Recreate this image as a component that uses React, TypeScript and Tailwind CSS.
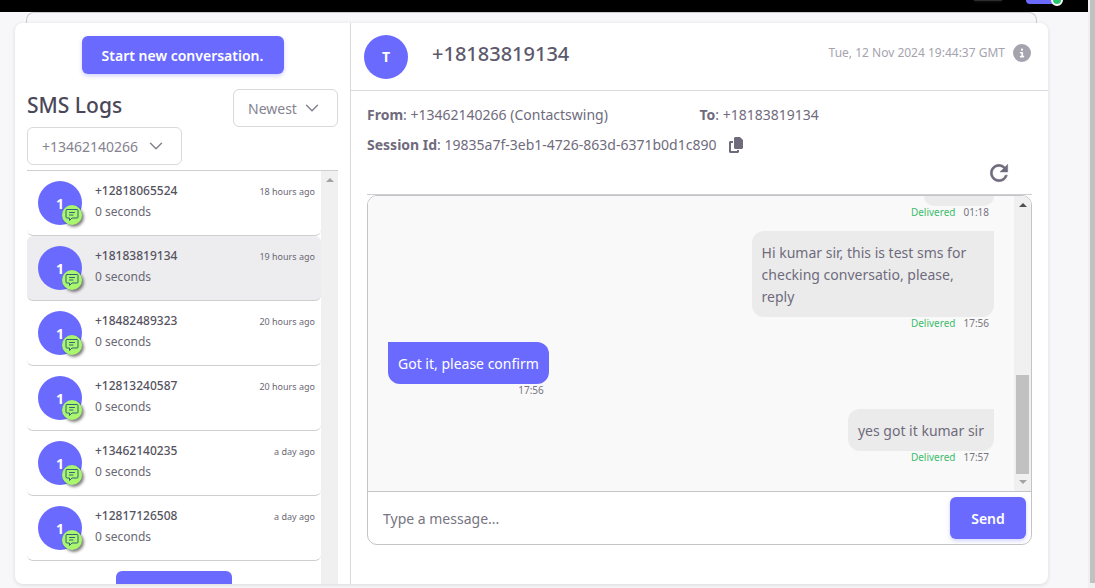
import React from "react";
import { FaCopy, FaCircleInfo } from "react-icons/fa6";
import { ChevronDown } from "lucide-react";

type Log = { phone: string; duration: string; ago: string; active?: boolean };
type Message = { text: string; time: string; sent: boolean };

const logs: Log[] = [
  { phone: "+12818065524", duration: "0 seconds", ago: "18 hours ago" },
  { phone: "+18183819134", duration: "0 seconds", ago: "19 hours ago", active: true },
  { phone: "+18482489323", duration: "0 seconds", ago: "20 hours ago" },
  { phone: "+12813240587", duration: "0 seconds", ago: "20 hours ago" },
  { phone: "+13462140235", duration: "0 seconds", ago: "a day ago" },
  { phone: "+12817126508", duration: "0 seconds", ago: "a day ago" },
];

const messages: Message[] = [
  { text: "", time: "01:18", sent: true },
  { text: "Hi kumar sir, this is test sms for checking conversatio, please, reply", time: "17:56", sent: true },
  { text: "Got it, please confirm", time: "17:56", sent: false },
  { text: "yes got it kumar sir", time: "17:57", sent: true },
];

function Dropdown({ label, value }: { label: string; value: string }) {
  return (
    <div className="relative">
      <select
        aria-label={label}
        className="h-[38px] w-full appearance-none rounded-md border border-[#d8d8dd] bg-white pl-[14px] pr-8 text-[14px] text-[#85838f]"
      >
        <option>{value}</option>
      </select>
      <ChevronDown strokeWidth={1.6} className="pointer-events-none absolute right-[15px] top-2 size-[22px] text-[#85838f]" />
    </div>
  );
}

function SmsIcon() {
  return (
    <svg viewBox="0 0 14 14" className="size-[14px]" fill="none" stroke="currentColor" strokeLinejoin="round" strokeLinecap="round">
      <path d="M2 1.500h10a1 1 0 0 1 1 1v6.500a1 1 0 0 1-1 1H7l-2.500 2.500V10H2a1 1 0 0 1-1-1V2.500a1 1 0 0 1 1-1Z" />
      <path d="M4.500 4.500h5M4.500 7h3.500" />
    </svg>
  );
}

function RefreshIcon() {
  return (
    <svg viewBox="0 0 24 24" className="size-[26px]" fill="currentColor" stroke="currentColor" strokeWidth="0.5">
      <path d="M17.650 6.350A7.958 7.958 0 0 0 12 4c-4.420 0-7.990 3.580-7.990 8s3.570 8 7.990 8c3.730 0 6.840-2.550 7.730-6h-2.080A5.990 5.990 0 0 1 12 18c-3.310 0-6-2.690-6-6s2.690-6 6-6c1.660 0 3.140.690 4.220 1.780L13 11h7V4l-2.350 2.350z" />
    </svg>
  );
}

function LogRow({ log }: { log: Log }) {
  return (
    <li
      className={
        log.active
          ? "flex h-[65px] shrink-0 rounded-md border-b border-[#cfcfd2] bg-[#ededf0] pl-[11px] pr-[6px]"
          : "flex h-[65px] shrink-0 rounded-md border-b border-[#cfcfd2] bg-white pl-[11px] pr-[6px]"
      }
    >
      <div className="relative mt-[10px] flex size-11 items-center justify-center rounded-full bg-[#6a6aff] text-[14px] font-bold text-white">
        1
        <span className="absolute bottom-0 right-0 flex size-5 items-center justify-center rounded-full bg-[#a8f76e] text-[#35607a] shadow-[2px_2px_3px_rgba(0,0,0,0.5)]">
          <SmsIcon />
        </span>
      </div>
      <div className="ml-[13px] mt-[9px] flex-1 text-[12px] leading-[21px] text-[#6a6874]">
        <p className="font-medium text-[#55535f]">{log.phone}</p>
        <p>{log.duration}</p>
      </div>
      <time className="mt-[10px] text-[9px] leading-[21px] text-[#6a6874]">{log.ago}</time>
    </li>
  );
}

function Bubble({ message }: { message: Message }) {
  return (
    <li
      className={
        message.sent
          ? "mb-3 flex max-w-[40%] flex-col items-end self-end"
          : "mb-3 flex max-w-[40%] flex-col items-end self-start"
      }
    >
      <p
        className={
          message.sent
            ? "min-w-[70px] rounded-xl rounded-tr-none bg-[#ebebeb] px-[10px] pb-[9px] pt-[11px] text-[14px] leading-[22px] text-[#6f6b7d]"
            : "min-w-[70px] rounded-xl rounded-tl-none bg-[#6a6aff] px-[10px] pb-[9px] pt-[11px] text-[14px] leading-[22px] text-white"
        }
      >
        {message.text}
      </p>
      <p className="flex justify-end gap-2 pr-[5px] text-[10px] leading-[13px] text-[#77757f]">
        {message.sent && <span className="text-[#3cbc6c]">Delivered</span>}
        <time>{message.time}</time>
      </p>
    </li>
  );
}

export default function App() {
  return (
    <div className="flex h-screen overflow-hidden bg-[#f7f7f9] font-['Noto_Sans','Open_Sans',sans-serif] text-[#6f6b7d]">
      <div className="flex min-w-0 flex-1 flex-col">
        <header className="flex h-3 shrink-0 items-start justify-end bg-black pr-[26px]">
          <div className="mr-6 h-px w-7 rounded-b-md bg-[#2c2c2c] shadow-[0_0_3px_#3c3c3c]" />
          <div className="relative h-1 w-9 rounded-b-sm bg-[#6a6aff]">
            <span className="absolute -right-px -top-[6px] size-3 rounded-full border-2 border-white bg-[#28c76f]" />
          </div>
        </header>
        <div className="ml-[26px] mr-[51px] h-[11px] shrink-0 rounded-t-lg border border-b-0 border-[#cdcdd0]" />

        <main className="mb-1 ml-[15px] mr-10 flex min-h-0 flex-1 overflow-hidden rounded-lg bg-white shadow-[0_1px_4px_rgba(0,0,0,0.12)]">
          <aside className="flex w-[336px] shrink-0 flex-col border-r border-[#d8d8dd] px-3 pt-[13px]">
            <button className="h-[38px] w-[202px] self-center rounded-md bg-[#6a6aff] text-[14px] font-semibold text-white shadow-[0_2px_4px_rgba(105,108,255,0.3)]">
              Start new conversation.
            </button>
            <div className="mt-[15px] flex h-[38px] items-start justify-between">
              <h1 className="text-[21px] font-medium leading-8 text-[#4a4758]">SMS Logs</h1>
              <div className="w-[105px]">
                <Dropdown label="Sort order" value="Newest" />
              </div>
            </div>
            <div className="w-[155px]">
              <Dropdown label="Phone number" value="+13462140266" />
            </div>
            <div className="mt-[5px] flex min-h-0 flex-1 overflow-hidden border-t border-[#cfcfd2]">
              <div className="flex min-w-0 flex-1 flex-col">
                <ul className="flex flex-col">
                  {logs.map((log) => (
                    <LogRow key={log.phone} log={log} />
                  ))}
                </ul>
                <button className="mt-[10px] h-[38px] w-[116px] shrink-0 self-center rounded-md bg-[#6a6aff]" aria-label="Load more" />
              </div>
              <div className="flex w-[17px] justify-center bg-[#f0f0f0] pt-[7px]">
                <svg viewBox="0 0 8 4" className="h-1 w-2" fill="#a3a3a3">
                  <path d="M0 4L4 0L8 4Z" />
                </svg>
              </div>
            </div>
          </aside>

          <section className="flex min-w-0 flex-1 flex-col">
            <div className="flex h-[68px] shrink-0 items-center border-b border-[#d8d8dd] pl-[13px] pr-[17px]">
              <div className="flex size-11 items-center justify-center rounded-full bg-[#6a6aff] text-[14px] font-bold text-white">T</div>
              <h2 className="ml-6 flex-1 pb-[6px] text-[20px] font-medium text-[#5d596c]">+18183819134</h2>
              <div className="flex items-center gap-2 pb-2 text-[#a5a3ae]">
                <time className="text-[12px]">Tue, 12 Nov 2024 19:44:37 GMT</time>
                <FaCircleInfo className="size-[18px]" />
              </div>
            </div>

            <div className="flex min-h-0 flex-1 flex-col px-4">
              <div className="grid grid-cols-2 pt-[9px] text-[14px] leading-[30px]">
                <p>
                  <b>From</b>: +13462140266 (Contactswing)
                </p>
                <p>
                  <b>To</b>: +18183819134
                </p>
                <p className="col-span-2 flex items-center">
                  <span>
                    <b>Session Id</b>: 19835a7f-3eb1-4726-863d-6371b0d1c890
                  </span>
                  <button aria-label="Copy session id" className="ml-3">
                    <FaCopy className="size-4" />
                  </button>
                </p>
              </div>
              <div className="flex h-[35px] shrink-0 items-start justify-end border-b border-[#cfcfd2] pr-5">
                <button aria-label="Refresh">
                  <RefreshIcon />
                </button>
              </div>

              <div className="mb-[39px] flex min-h-0 flex-1 flex-col overflow-hidden rounded-[10px] border border-[#c4c4c8]">
                <div className="flex min-h-0 flex-1 bg-[#f9f9f9]">
                  <ul className="flex min-w-0 flex-1 flex-col justify-end overflow-hidden px-5 pb-[15px]">
                    {messages.map((m) => (
                      <Bubble key={m.text} message={m} />
                    ))}
                  </ul>
                  <div className="flex w-[17px] flex-col items-center bg-[#f0f0f0] py-[7px]">
                    <svg viewBox="0 0 8 4" className="h-1 w-2" fill="#505050">
                      <path d="M0 4L4 0L8 4Z" />
                    </svg>
                    <div className="mb-[6px] mt-auto h-[99px] w-[13px] bg-[#c1c1c1]" />
                    <svg viewBox="0 0 8 4" className="h-1 w-2" fill="#a3a3a3">
                      <path d="M0 0L4 4L8 0Z" />
                    </svg>
                  </div>
                </div>
                <form className="flex h-[53px] shrink-0 items-center border-t border-[#c4c4c8] pl-[15px] pr-[5px]">
                  <input
                    aria-label="Message"
                    placeholder="Type a message..."
                    className="min-w-0 flex-1 bg-transparent text-[14px] outline-none placeholder:text-[#77757f]"
                  />
                  <button
                    type="button"
                    className="h-[42px] w-[76px] rounded-md bg-[#6a6aff] text-[14px] font-semibold text-white shadow-[0_2px_4px_rgba(105,108,255,0.3)]"
                  >
                    Send
                  </button>
                </form>
              </div>
            </div>
          </section>
        </main>
      </div>
      <div className="w-[7px] shrink-0 bg-[#f0f0f0] pb-[5px] pl-[2px]">
        <div className="h-full bg-[#c1c1c1]" />
      </div>
    </div>
  );
}
